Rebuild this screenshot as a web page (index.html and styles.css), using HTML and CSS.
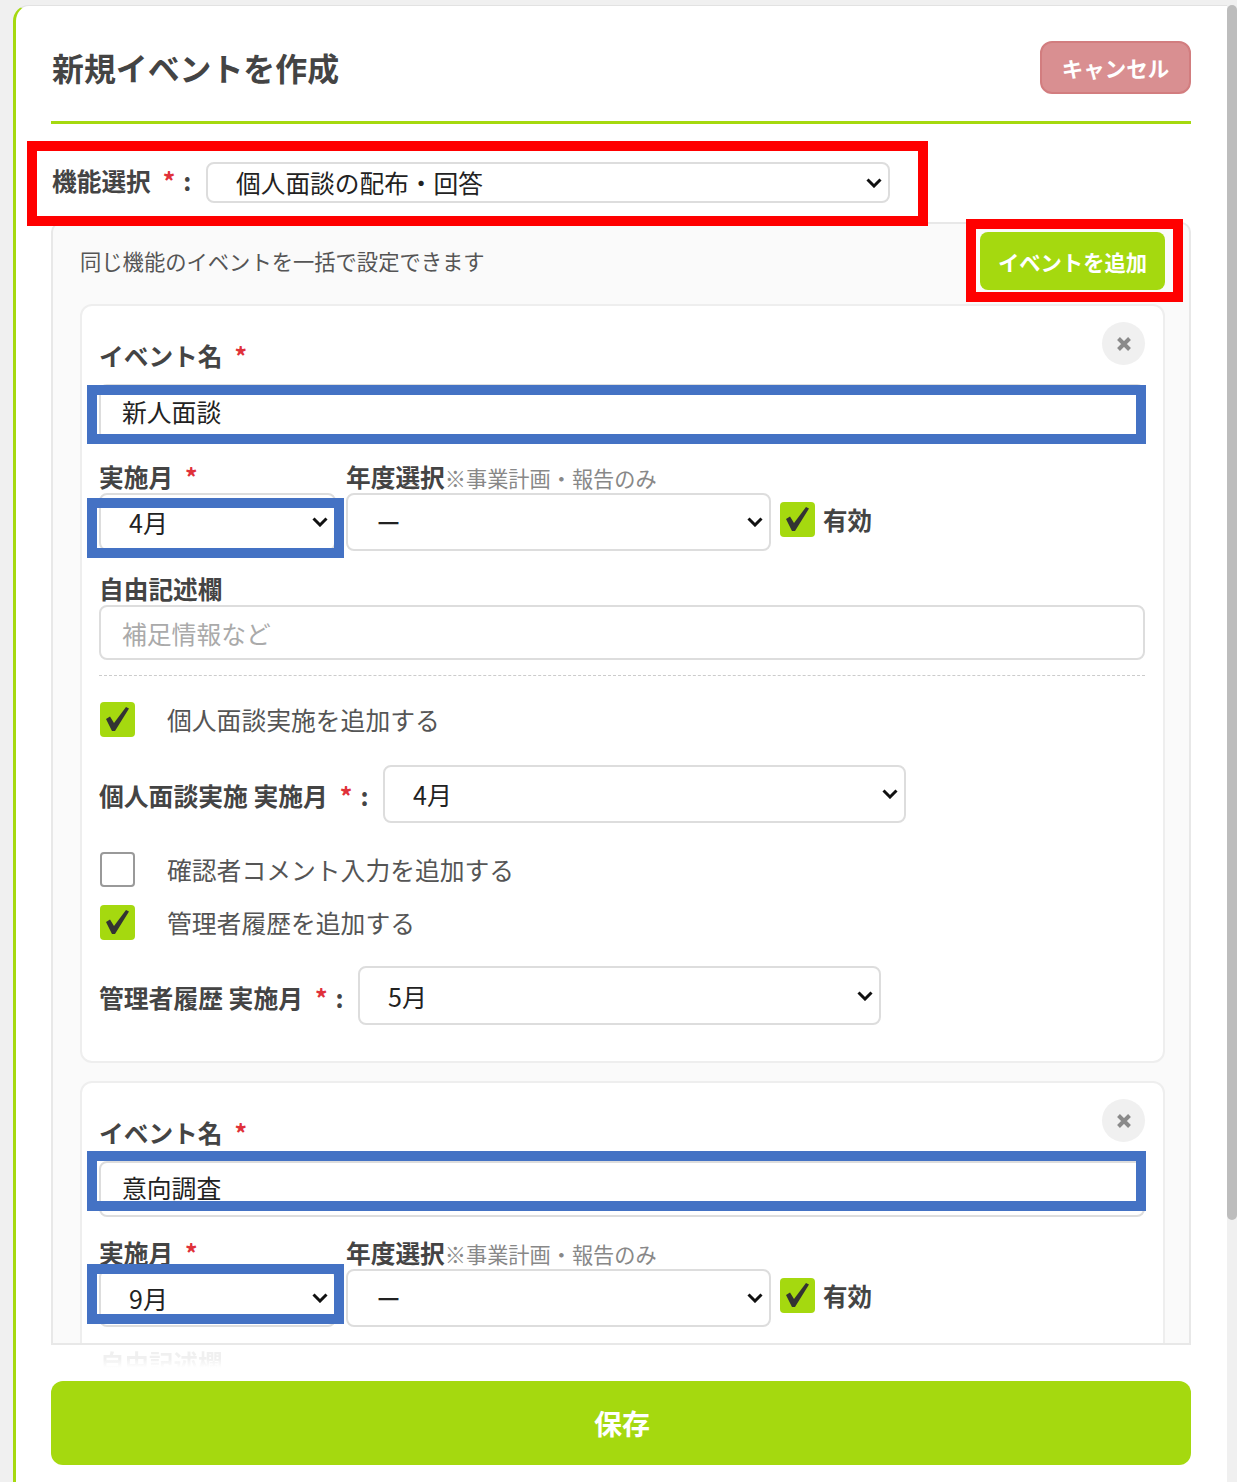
FILE: index.html
```html
<!DOCTYPE html>
<html lang="ja">
<head>
    <meta charset="UTF-8">
    <title>新規イベントを作成</title>
    <link rel="stylesheet" href="styles.css">
</head>
<body>

    <div class="modal">
        <div class="modal-header">
            <h2 class="modal-title">新規イベントを作成</h2>
            <button class="btn-cancel">キャンセル</button>
        </div>

        <div class="function-row">
            <label class="field-label">機能選択<span class="req">*</span><span class="colon">:</span></label>
            <select class="select function-select"><option>個人面談の配布・回答</option></select>
        </div>

        <div class="panel">
            <div class="panel-head">
                <p class="hint">同じ機能のイベントを一括で設定できます</p>
                <button class="btn-add">イベントを追加</button>
            </div>

            <!-- イベント1 -->
            <div class="card">
                <button class="btn-close" aria-label="削除">
                    <svg width="16" height="16" viewBox="0 0 16 16"><path d="M2.5 2.5l11 11M13.5 2.5l-11 11" stroke="#8a8a8a" stroke-width="4" fill="none"/></svg>
                </button>
                <label class="field-label name-label">イベント名<span class="req">*</span></label>
                <input class="input name-input" type="text" value="新人面談">

                <div class="month-row">
                    <div class="month-col">
                        <label class="field-label">実施月<span class="req">*</span></label>
                        <select class="select"><option>4月</option></select>
                    </div>
                    <div class="year-col">
                        <label class="field-label">年度選択<span class="note">※事業計画・報告のみ</span></label>
                        <select class="select"><option>ー</option></select>
                    </div>
                    <label class="active-check"><input class="check" type="checkbox" checked>有効</label>
                </div>

                <label class="field-label memo-label">自由記述欄</label>
                <input class="input memo-input" type="text" placeholder="補足情報など">

                <div class="dashed"></div>

                <label class="check-row first-check"><input class="check" type="checkbox" checked>個人面談実施を追加する</label>
                <div class="sub-row interview-row">
                    <label class="field-label">個人面談実施 実施月<span class="req">*</span><span class="colon">:</span></label>
                    <select class="select sub-select"><option>4月</option></select>
                </div>
                <label class="check-row second-check"><input class="check" type="checkbox">確認者コメント入力を追加する</label>
                <label class="check-row third-check"><input class="check" type="checkbox" checked>管理者履歴を追加する</label>
                <div class="sub-row history-row">
                    <label class="field-label">管理者履歴 実施月<span class="req">*</span><span class="colon">:</span></label>
                    <select class="select sub-select"><option>5月</option></select>
                </div>
            </div>

            <!-- イベント2 -->
            <div class="card">
                <button class="btn-close" aria-label="削除">
                    <svg width="16" height="16" viewBox="0 0 16 16"><path d="M2.5 2.5l11 11M13.5 2.5l-11 11" stroke="#8a8a8a" stroke-width="4" fill="none"/></svg>
                </button>
                <label class="field-label name-label">イベント名<span class="req">*</span></label>
                <input class="input name-input" type="text" value="意向調査">

                <div class="month-row">
                    <div class="month-col">
                        <label class="field-label">実施月<span class="req">*</span></label>
                        <select class="select"><option>9月</option></select>
                    </div>
                    <div class="year-col">
                        <label class="field-label">年度選択<span class="note">※事業計画・報告のみ</span></label>
                        <select class="select"><option>ー</option></select>
                    </div>
                    <label class="active-check"><input class="check" type="checkbox" checked>有効</label>
                </div>
            </div>
        </div>

        <div class="fade-row"><span class="fade-text">自由記述欄</span></div>
        <button class="btn-save">保存</button>
    </div>

    <div class="scrollbar"><div class="scrollbar-thumb"></div></div>

    <!-- 説明用の枠 -->
    <div class="mark mark-red mark-function"></div>
    <div class="mark mark-red mark-add"></div>
    <div class="mark mark-blue mark-name1"></div>
    <div class="mark mark-blue mark-month1"></div>
    <div class="mark mark-blue mark-name2"></div>
    <div class="mark mark-blue mark-month2"></div>

</body>
</html>
```

FILE: styles.css
```css
* {
    margin: 0;
    padding: 0;
    box-sizing: border-box;
    font-family: "Noto Sans CJK JP", "Noto Sans", sans-serif;
}
body {
    position: relative;
    display: flex;
    width: 1237px;
    height: 1482px;
    padding-left: 13px;
    background: #f0f0f0;
    overflow: hidden;
    color: #444;
}
.modal {
    width: 1214px;
    height: 1477px;
    margin-top: 5px;
    padding: 0 36px 0 35px;
    background: #fff;
    border-left: 3px solid #a5d90f;
    border-top: 1px solid #e2e2e2;
    border-top-left-radius: 16px;
}
.modal-header {
    display: flex;
    justify-content: space-between;
    align-items: flex-start;
    height: 118px;
    border-bottom: 3px solid #a5d90f;
}
.modal-title {
    margin: 39px 0 0 1px;
    font-size: 31.9px;
    font-weight: bold;
    line-height: 44px;
}
.btn-cancel {
    width: 151px;
    height: 53px;
    margin-top: 35px;
    background: #d98f91;
    border: 2px solid #d27d7f;
    border-radius: 12px;
    color: white;
    font-size: 21.5px;
    font-weight: bold;
}
.function-row {
    display: flex;
    align-items: center;
    margin-top: 38px;
}
.field-label {
    display: block;
    font-size: 24.7px;
    font-weight: bold;
    line-height: 32px;
    white-space: nowrap;
}
.req {
    margin-left: 12px;
    color: #e0313a;
}
.colon {
    margin-left: 8px;
}
.function-row .field-label {
    width: 154px;
    margin: -6px 0 0 1px;
}
.select {
    display: block;
    width: 100%;
    height: 58px;
    padding-left: 28px;
    background: #fff url("data:image/svg+xml,%3Csvg xmlns='http://www.w3.org/2000/svg' width='16' height='10' viewBox='0 0 16 10'%3E%3Cpath d='M1.5 1.5L8 8l6.5-6.5' fill='none' stroke='%23111' stroke-width='3'/%3E%3C/svg%3E") no-repeat right 6px center;
    border: 2px solid #ddd;
    border-radius: 8px;
    color: #222;
    font-size: 25px;
    appearance: none;
}
.function-select {
    width: 684px;
    height: 41px;
    padding-bottom: 3px;
    font-size: 24.7px;
}
.input {
    display: block;
    width: 100%;
    padding: 0 0 4px 21px;
    border: 2px solid #ddd;
    border-radius: 8px;
    color: #222;
    font-size: 24.8px;
}
.input::placeholder {
    color: #aaa;
}
.panel {
    height: 1123px;
    margin-top: 19px;
    padding: 8px 24px 0 27px;
    background: #fafafa;
    border: 2px solid #e8e8e8;
    border-top-left-radius: 10px;
    border-top-right-radius: 10px;
    overflow: hidden;
}
.panel-head {
    display: flex;
    justify-content: space-between;
    align-items: center;
}
.hint {
    margin-top: -2px;
    font-size: 21.3px;
    color: #555;
}
.btn-add {
    width: 185px;
    height: 58px;
    background: #a5d90f;
    border: none;
    border-radius: 8px;
    color: white;
    font-size: 21.3px;
    font-weight: bold;
}
.card {
    position: relative;
    height: 759px;
    margin-top: 14px;
    padding: 31px 18px 0 17px;
    background: #fff;
    border: 2px solid #eee;
    border-radius: 12px;
}
.card + .card {
    margin-top: 18px;
}
.btn-close {
    position: absolute;
    top: 16px;
    right: 18px;
    display: flex;
    align-items: center;
    justify-content: center;
    width: 43px;
    height: 43px;
    background: #f0f0f0;
    border: none;
    border-radius: 50%;
}
.name-label {
    line-height: 36px;
}
.name-input {
    height: 57px;
    margin-top: 11px;
}
.card + .card .name-input {
    height: 56px;
}
.month-row {
    display: flex;
    margin-top: 20px;
}
.month-row .field-label {
    margin-bottom: 2px;
    line-height: 30px;
}
.month-col {
    width: 237px;
    margin-right: 10px;
}
.year-col {
    width: 425px;
    margin-right: 9px;
}
.note {
    font-size: 21.2px;
    font-weight: normal;
    line-height: 1;
    color: #888;
}
.active-check {
    display: flex;
    align-items: center;
    gap: 8px;
    height: 35px;
    margin-top: 41px;
    font-size: 24.5px;
    font-weight: bold;
}
.check {
    flex: none;
    width: 35px;
    height: 35px;
    border: 2px solid #999;
    border-radius: 4px;
    background: #fff;
    appearance: none;
}
.check:checked {
    background: #a5d90f url("data:image/svg+xml,%3Csvg xmlns='http://www.w3.org/2000/svg' width='35' height='35' viewBox='0 0 35 35'%3E%3Cpath d='M6 17l4-2.500 4 6.500L26 5l3 1.500L15 29h-3z' fill='%23333'/%3E%3C/svg%3E") no-repeat center;
    border: none;
}
.memo-label {
    margin: 22px 0 1px;
    line-height: 31px;
}
.memo-input {
    height: 55px;
    padding-bottom: 0;
}
.dashed {
    margin-top: 15px;
    border-top: 1px dashed #ccc;
}
.check-row {
    display: flex;
    align-items: center;
    gap: 32px;
    height: 35px;
    margin-left: 1px;
    font-size: 24.8px;
    color: #555;
    line-height: 38px;
}
.check-row .check {
    margin-top: 2px;
}
.first-check {
    margin-top: 25px;
}
.second-check {
    margin-top: 28px;
}
.third-check {
    margin-top: 18px;
}
.sub-row {
    display: flex;
    align-items: center;
}
.sub-row .field-label {
    margin-top: 2px;
    font-size: 24.8px;
}
.sub-select {
    width: 523px;
}
.interview-row {
    margin-top: 29px;
}
.interview-row .field-label {
    width: 284px;
}
.history-row {
    margin-top: 27px;
}
.history-row .field-label {
    width: 259px;
}
.history-row .sub-select {
    height: 59px;
}
.fade-row {
    height: 36px;
    padding-left: 49px;
    font-size: 24.5px;
    font-weight: bold;
    line-height: 36px;
}
.fade-text {
    background: linear-gradient(#f0f0f0 40%, #fff 65%);
    -webkit-background-clip: text;
    background-clip: text;
    color: transparent;
}
.btn-save {
    display: block;
    width: 100%;
    height: 84px;
    padding-left: 2px;
    background: #a5d90f;
    border: none;
    border-radius: 12px;
    color: white;
    font-size: 28px;
    font-weight: bold;
}
.scrollbar {
    width: 10px;
    margin-top: 5px;
    background: #f0f0f0;
}
.scrollbar-thumb {
    height: 1215px;
    background: #bdbdbd;
    border-radius: 5px;
}
/* 説明用の枠 */
.mark {
    position: absolute;
    border-style: solid;
    border-width: 10px;
}
.mark-red {
    border-color: #f00;
}
.mark-blue {
    border-color: #4472c4;
}
.mark-function {
    left: 27px;
    top: 141px;
    width: 901px;
    height: 85px;
}
.mark-add {
    left: 966px;
    top: 219px;
    width: 217px;
    height: 83px;
}
.mark-name1 {
    left: 87px;
    top: 385px;
    width: 1059px;
    height: 59px;
}
.mark-month1 {
    left: 87px;
    top: 498px;
    width: 257px;
    height: 60px;
}
.mark-name2 {
    left: 87px;
    top: 1151px;
    width: 1059px;
    height: 60px;
}
.mark-month2 {
    left: 87px;
    top: 1264px;
    width: 257px;
    height: 60px;
}
```
